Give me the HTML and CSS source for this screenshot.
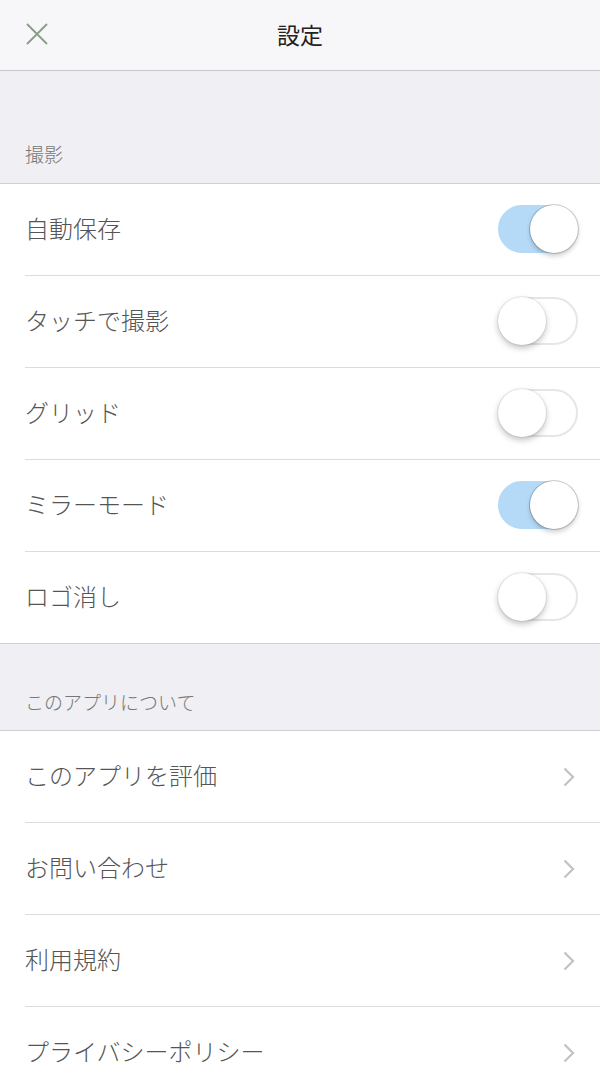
FILE: index.html
```html
<!DOCTYPE html>
<html lang="ja">
<head>
<meta charset="utf-8">
<link rel="stylesheet" href="styles.css">
</head>
<body>
<header class="nav">
  <button class="close" aria-label="閉じる">
    <svg width="22" height="22" viewBox="0 0 22 22"><path d="M1 1L21 21M21 1L1 21" stroke="#8a9b88" stroke-width="1.8" fill="none"/></svg>
  </button>
  <h1 class="title">設定</h1>
</header>

<div class="section-head first"><span>撮影</span></div>
<ul class="list">
  <li class="row"><span class="label">自動保存</span><span class="toggle on"><span class="knob"></span></span></li>
  <li class="row"><span class="label">タッチで撮影</span><span class="toggle"><span class="knob"></span></span></li>
  <li class="row"><span class="label">グリッド</span><span class="toggle"><span class="knob"></span></span></li>
  <li class="row"><span class="label">ミラーモード</span><span class="toggle on"><span class="knob"></span></span></li>
  <li class="row"><span class="label">ロゴ消し</span><span class="toggle"><span class="knob"></span></span></li>
</ul>

<div class="section-head"><span>このアプリについて</span></div>
<ul class="list">
  <li class="row link"><span class="label">このアプリを評価</span><svg class="chev" width="12" height="20" viewBox="0 0 12 20"><path d="M1.5 1.5L10 10L1.5 18.5" stroke="#c2c2c5" stroke-width="2.2" fill="none"/></svg></li>
  <li class="row link"><span class="label">お問い合わせ</span><svg class="chev" width="12" height="20" viewBox="0 0 12 20"><path d="M1.5 1.5L10 10L1.5 18.5" stroke="#c2c2c5" stroke-width="2.2" fill="none"/></svg></li>
  <li class="row link"><span class="label">利用規約</span><svg class="chev" width="12" height="20" viewBox="0 0 12 20"><path d="M1.5 1.5L10 10L1.5 18.5" stroke="#c2c2c5" stroke-width="2.2" fill="none"/></svg></li>
  <li class="row link"><span class="label">プライバシーポリシー</span><svg class="chev" width="12" height="20" viewBox="0 0 12 20"><path d="M1.5 1.5L10 10L1.5 18.5" stroke="#c2c2c5" stroke-width="2.2" fill="none"/></svg></li>
</ul>
</body>
</html>
```

FILE: styles.css
```css
* { box-sizing: border-box; }
html, body { margin: 0; padding: 0; }
body {
  width: 600px;
  height: 1067px;
  overflow: hidden;
  background: #efeff4;
  font-family: "Noto Sans CJK JP", "Noto Sans", sans-serif;
}
.nav {
  height: 71px;
  background: #f7f7f9;
  border-bottom: 1px solid #c9c9cc;
  display: flex;
  align-items: center;
  justify-content: center;
  position: relative;
}
.close {
  position: absolute;
  left: 26px;
  top: 23px;
  padding: 0;
  border: 0;
  background: none;
  width: 22px;
  height: 22px;
  display: flex;
}
.title {
  margin: 0;
  font-size: 23px;
  font-weight: 400;
  color: #222;
  line-height: 1;
  margin-top: -2px;
}
.section-head {
  height: 87px;
  display: flex;
  align-items: flex-end;
  padding: 0 25px 19px;
  font-size: 19px;
  font-weight: 300;
  color: #777;
  line-height: 1;
  border-bottom: 1px solid #d0d0d4;
}
.section-head.first { height: 113px; padding-bottom: 20px; }
.list {
  list-style: none;
  margin: 0;
  padding: 0 0 0 25px;
  background: #fff;
  border-bottom: 1px solid #cfcfd3;
}
.row {
  height: 92px;
  display: flex;
  align-items: center;
  justify-content: space-between;
  padding-right: 22px;
  border-bottom: 1px solid #dcdcdf;
}
.row:last-child { border-bottom: 0; height: 91px; }
.label {
  font-size: 24px;
  font-weight: 300;
  color: #555;
  line-height: 1;
  margin-top: -4px;
}
.toggle {
  width: 80px;
  height: 48px;
  border-radius: 24px;
  border: 2px solid #e6e6e8;
  background: #fff;
  position: relative;
  display: flex;
  align-items: center;
  margin-top: -2px;
}
.toggle .knob {
  position: absolute;
  left: -2px;
  top: -2px;
  width: 48px;
  height: 48px;
  border-radius: 50%;
  background: #fff;
  box-shadow: 0 0 0 1px rgba(0,0,0,0.06), 0 3px 6px rgba(0,0,0,0.25);
}
.toggle.on {
  background: #b5daf7;
  border-color: #b5daf7;
}
.toggle.on .knob {
  left: 30px;
  box-shadow: 0 0 0 1px rgba(0,0,0,0.18), 0 3px 5px rgba(0,0,0,0.2);
}
.row.link { padding-right: 25px; }
.chev { display: block; }
```
